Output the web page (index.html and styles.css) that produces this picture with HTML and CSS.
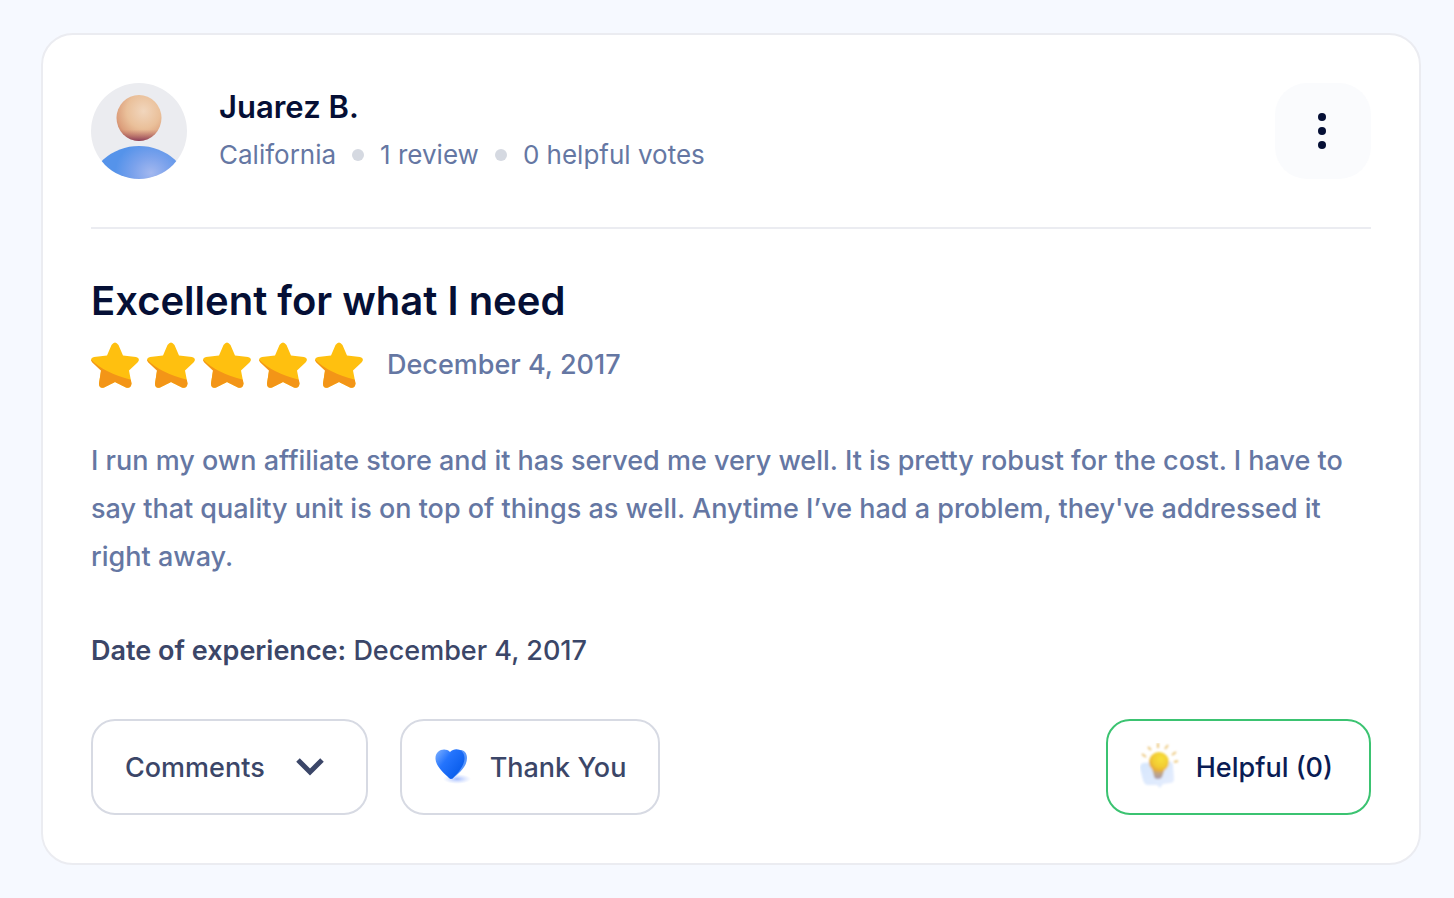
FILE: index.html
```html
<!DOCTYPE html>
<html lang="en">

<head>
    <meta charset="UTF-8">
    <meta name="viewport" content="width=device-width, initial-scale=1.0">
    <title>Customer Review</title>
    <link rel="stylesheet" href="styles.css">
</head>

<body>
    <!-- Shared star shape -->
    <svg class="sprite" aria-hidden="true">
        <defs>
            <clipPath id="star-clip">
                <path d="M20.500 4Q24-1 27.500 4L32 14.500L45 16Q50 17.500 46.500 21.500L38 29.500L40.500 42.500Q39.800 48 35 46.500L24 41L13 46.500Q8.200 48 8 42.500L10 29.500L1.500 21.500Q-2 17.500 3 16L16 14.500Z"/>
            </clipPath>
        </defs>
        <symbol id="star" viewBox="0 0 48 48">
            <g clip-path="url(#star-clip)">
                <path fill="#ffc00f" d="M0 0H48V48H0Z"/>
                <path fill="#f39517" d="M0 18.500Q13 32 41 39V48H0Z"/>
            </g>
        </symbol>
    </svg>

    <article class="review-card">
        <header class="review-header">
            <svg class="avatar" viewBox="0 0 96 96" role="img" aria-label="Profile picture">
                <defs>
                    <clipPath id="avatar-clip"><circle cx="48" cy="48" r="48"/></clipPath>
                    <radialGradient id="head" cx="0.6" cy="0.35" r="0.75">
                        <stop offset="0" stop-color="#f1d6bd"/>
                        <stop offset="0.5" stop-color="#eac09a"/>
                        <stop offset="0.8" stop-color="#dc9f7c"/>
                        <stop offset="1" stop-color="#c07660"/>
                    </radialGradient>
                    <linearGradient id="chin" x1="0" y1="0" x2="0" y2="1">
                        <stop offset="0.75" stop-color="#b0605c" stop-opacity="0"/>
                        <stop offset="1" stop-color="#833558" stop-opacity="0.9"/>
                    </linearGradient>
                    <radialGradient id="shirt" cx="0.62" cy="0.3" r="0.36">
                        <stop offset="0" stop-color="#a3b8ef"/>
                        <stop offset="0.5" stop-color="#7ba2ec"/>
                        <stop offset="1" stop-color="#5593ea"/>
                    </radialGradient>
                </defs>
                <g clip-path="url(#avatar-clip)">
                    <path fill="#ebecf0" d="M0 0H96V96H0Z"/>
                    <ellipse cx="48" cy="35" rx="22.500" ry="23" fill="url(#head)"/>
                    <ellipse cx="48" cy="35" rx="22.500" ry="23" fill="url(#chin)"/>
                    <ellipse cx="48" cy="108" rx="50" ry="45" fill="url(#shirt)"/>
                </g>
            </svg>
            <div class="author">
                <h2 class="author-name">Juarez B.</h2>
                <ul class="author-meta">
                    <li>California</li>
                    <li>1 review</li>
                    <li>0 helpful votes</li>
                </ul>
            </div>
            <button type="button" class="menu-button" aria-label="More options">
                <svg width="10" height="36" viewBox="0 0 10 36" fill="#050f35">
                    <circle cx="4" cy="4" r="4"/>
                    <circle cx="4" cy="18" r="4"/>
                    <circle cx="4" cy="32" r="4"/>
                </svg>
            </button>
        </header>

        <h1 class="review-title">Excellent for what I need</h1>
        <div class="rating">
            <div class="stars" role="img" aria-label="5 out of 5 stars">
                <svg class="star"><use href="#star"/></svg>
                <svg class="star"><use href="#star"/></svg>
                <svg class="star"><use href="#star"/></svg>
                <svg class="star"><use href="#star"/></svg>
                <svg class="star"><use href="#star"/></svg>
            </div>
            <time datetime="2017-12-04">December 4, 2017</time>
        </div>

        <p class="review-text">I run my own affiliate store and it has served me very well. It is pretty robust for the cost. I have to say that quality unit is on top of things as well. Anytime I’ve had a problem, they've addressed it right away.</p>
        <p class="experience"><strong>Date of experience:</strong> December 4, 2017</p>

        <footer class="review-actions">
            <button type="button" class="action-button comments">
                Comments
                <svg width="28" height="18" viewBox="0 0 28 18" fill="none" stroke="#3b4668" stroke-width="5">
                    <path d="M2 2L14 14L26 2"/>
                </svg>
            </button>
            <button type="button" class="action-button thanks">
                <svg width="40" height="40" viewBox="0 0 40 40">
                    <defs>
                        <linearGradient id="heart" x1="0" y1="0" x2="1" y2="0.8">
                            <stop offset="0" stop-color="#82b3ff"/>
                            <stop offset="0.4" stop-color="#2474fd"/>
                            <stop offset="1" stop-color="#0458e8"/>
                        </linearGradient>
                        <radialGradient id="heart-shadow">
                            <stop offset="0" stop-color="#7c9fff" stop-opacity="0.7"/>
                            <stop offset="1" stop-color="#a9c1ff" stop-opacity="0"/>
                        </radialGradient>
                    </defs>
                    <ellipse cx="23" cy="32" rx="14" ry="5" fill="url(#heart-shadow)"/>
                    <path fill="#5795fa" d="M20 6C24 1 33 2 33 11C33 20 25 26 18 32Z"/>
                    <path fill="url(#heart)" d="M16 5C11 0 1 3 1.500 12C2 20 11 27 15 31Q17 33 19 31C24 26 30 19 30.500 12C31 2 21 0 16 5Z"/>
                </svg>
                Thank You
            </button>
            <button type="button" class="action-button helpful">
                <svg width="40" height="48" viewBox="0 0 40 48">
                    <defs>
                        <radialGradient id="bulb" cx="0.6" cy="0.35" r="0.7">
                            <stop offset="0" stop-color="#f7e13b"/>
                            <stop offset="0.6" stop-color="#f2cb33"/>
                            <stop offset="1" stop-color="#e2a03c"/>
                        </radialGradient>
                        <linearGradient id="bulb-base" x1="0" y1="0" x2="0" y2="1">
                            <stop offset="0" stop-color="#e7b83e"/>
                            <stop offset="1" stop-color="#a899ad"/>
                        </linearGradient>
                        <linearGradient id="bubble" x1="0" y1="0" x2="1" y2="1">
                            <stop offset="0" stop-color="#d5e6fd"/>
                            <stop offset="1" stop-color="#e6edfd"/>
                        </linearGradient>
                        <filter id="soften"><feGaussianBlur stdDeviation="0.9"/></filter>
                    </defs>
                    <g filter="url(#soften)">
                        <path fill="url(#bubble)" d="M3 20L29 18Q33 19 33 23L34 36Q34 40 30 40L23 41L20 45L17 42L7 42Q4 41 3 37L0 25Q0 21 3 20Z"/>
                        <path fill="url(#bulb-base)" d="M11 22H26L22 34Q21 36 18 36Q14 36 14 33Z"/>
                        <circle cx="19" cy="19" r="10" fill="url(#bulb)"/>
                        <path fill="none" stroke="#ebc67a" stroke-width="2" d="M2 11L6 14M8 4L11 7M18 0V5M28 2L25 6M36 9L32 12M38 18L34 19"/>
                    </g>
                </svg>
                Helpful (0)
            </button>
        </footer>
    </article>
</body>

</html>
```
FILE: styles.css
```css
body {
    font-family: Inter, sans-serif;
    font-size: 27px;
    font-weight: 500;
    margin: 0;
    padding: 33px 33px 33px 41px;
    background-color: #f6f9ff;
    color: #6577a3;
    box-sizing: border-box;
}

.sprite {
    position: absolute;
    width: 0;
    height: 0;
}

.review-card {
    background-color: white;
    border: 2px solid #ebecf1;
    border-radius: 32px;
    padding: 48px;
}

.review-header {
    display: flex;
    align-items: center;
    gap: 32px;
    padding-bottom: 48px;
    border-bottom: 2px solid #ebecf1;
}

.avatar {
    width: 96px;
    height: 96px;
    flex-shrink: 0;
}

.author {
    flex: 1;
}

.author-name {
    margin: 0;
    color: #050f35;
    font-size: 31px;
    font-weight: 600;
    line-height: 48px;
}

.author-meta {
    display: flex;
    flex-wrap: wrap;
    margin: 0;
    padding: 0;
    list-style: none;
    font-size: 26px;
    font-weight: 400;
    line-height: 48px;
}

.author-meta li {
    display: flex;
    align-items: center;
}

.author-meta li + li::before {
    content: "";
    width: 12px;
    height: 12px;
    margin: 0 16px;
    border-radius: 50%;
    background-color: #d5d9e1;
}

.menu-button {
    display: flex;
    align-items: center;
    justify-content: center;
    width: 96px;
    height: 96px;
    padding: 0;
    border: none;
    border-radius: 32px;
    background-color: #fafbfd;
    cursor: pointer;
}

.review-title {
    margin: 48px 0 16px;
    color: #050f35;
    font-size: 40px;
    font-weight: 600;
    line-height: 48px;
}

.rating {
    display: flex;
    align-items: center;
    gap: 24px;
    line-height: 48px;
}

.stars {
    display: flex;
    gap: 8px;
}

.star {
    width: 48px;
    height: 48px;
}

.review-text {
    margin: 48px 0;
    line-height: 48px;
}

.experience {
    margin: 48px 0 46px;
    color: #3b4668;
    line-height: 44px;
}

.experience strong {
    font-weight: 600;
}

.review-actions {
    display: flex;
    flex-wrap: wrap;
    gap: 32px;
}

.action-button {
    display: flex;
    align-items: center;
    gap: 16px;
    height: 96px;
    padding: 0 32px;
    border: 2px solid #d7dae3;
    border-radius: 24px;
    background-color: white;
    color: #3b4668;
    font-family: inherit;
    font-size: 27px;
    font-weight: 500;
    cursor: pointer;
}

.comments {
    gap: 31px;
    padding-right: 42px;
}

.helpful {
    margin-left: auto;
    padding-right: 36px;
    border-color: #3bc371;
    color: #0a1c54;
}
```
